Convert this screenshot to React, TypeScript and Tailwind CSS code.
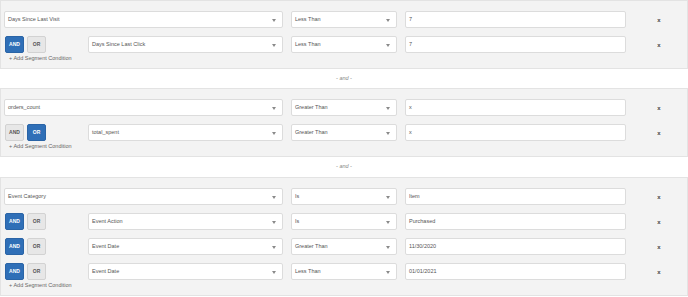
import React from 'react'

type Cond = {
  logic?: 'and' | 'or'
  field: string
  op: string
  value: string
}

type Segment = Cond[]

const segments: Segment[] = [
  [
    { field: 'Days Since Last Visit', op: 'Less Than', value: '7' },
    { logic: 'and', field: 'Days Since Last Click', op: 'Less Than', value: '7' },
  ],
  [
    { field: 'orders_count', op: 'Greater Than', value: 'x' },
    { logic: 'or', field: 'total_spent', op: 'Greater Than', value: 'x' },
  ],
  [
    { field: 'Event Category', op: 'Is', value: 'Item' },
    { logic: 'and', field: 'Event Action', op: 'Is', value: 'Purchased' },
    { logic: 'and', field: 'Event Date', op: 'Greater Than', value: '11/30/2020' },
    { logic: 'and', field: 'Event Date', op: 'Less Than', value: '01/01/2021' },
  ],
]

function Select({ label, className }: { label: string; className: string }) {
  return (
    <div
      className={`relative flex h-[17px] items-center rounded-[2px] border border-[#dcdcdc] bg-white pl-[3px] text-[#555] ${className}`}
    >
      <span>{label}</span>
      {/* caret */}
      <span className="absolute right-[6px] top-[7px] h-0 w-0 border-x-[2px] border-t-[3px] border-x-transparent border-t-[#8a8a8a]" />
    </div>
  )
}

function LogicButtons({ logic }: { logic: 'and' | 'or' }) {
  const on = 'bg-[#2f6fb7] border-[#2a64a6] text-white'
  const off = 'bg-[#e7e7e7] border-[#d2d2d2] text-[#555]'
  return (
    <div className="ml-[1px] flex w-[75px] gap-[3px]">
      <div
        className={`flex h-[17px] w-[19px] items-center justify-center rounded-[2px] border text-[5px] font-bold ${logic === 'and' ? on : off}`}
      >
        AND
      </div>
      <div
        className={`flex h-[17px] w-[19px] items-center justify-center rounded-[2px] border text-[5px] font-bold ${logic === 'or' ? on : off}`}
      >
        OR
      </div>
    </div>
  )
}

function Row({ cond }: { cond: Cond }) {
  return (
    <div className="flex items-center gap-[8px]">
      {cond.logic ? (
        <>
          <LogicButtons logic={cond.logic} />
          <Select label={cond.field} className="w-[195px]" />
        </>
      ) : (
        <Select label={cond.field} className="w-[279px]" />
      )}
      <Select label={cond.op} className="w-[106px]" />
      <div className="flex h-[17px] w-[221px] items-center rounded-[2px] border border-[#dcdcdc] bg-white pl-[3px] text-[#555]">
        {cond.value}
      </div>
      <div className="flex w-[50px] justify-center text-[6px] font-bold text-[#444]">x</div>
    </div>
  )
}

function SegmentPanel({ rows }: { rows: Segment }) {
  return (
    <div className="border border-[#e3e3e3] bg-[#f3f3f3] pl-[3px] pt-[10px] pb-[4px]">
      <div className="flex flex-col gap-[8px]">
        {rows.map((c, i) => (
          <Row key={i} cond={c} />
        ))}
      </div>
      <div className="mt-[1px] flex h-[10px] items-center pl-[5px] text-[#666]">+ Add Segment Condition</div>
    </div>
  )
}

export default function App() {
  return (
    <div className="w-[688px] bg-white font-['Liberation_Sans',Arial,sans-serif] text-[5.5px] leading-none">
      <SegmentPanel rows={segments[0]} />
      <div className="flex h-[19px] items-center justify-center italic text-[#888]">- and -</div>
      <SegmentPanel rows={segments[1]} />
      <div className="flex h-[20px] items-center justify-center italic text-[#888]">- and -</div>
      <SegmentPanel rows={segments[2]} />
    </div>
  )
}
